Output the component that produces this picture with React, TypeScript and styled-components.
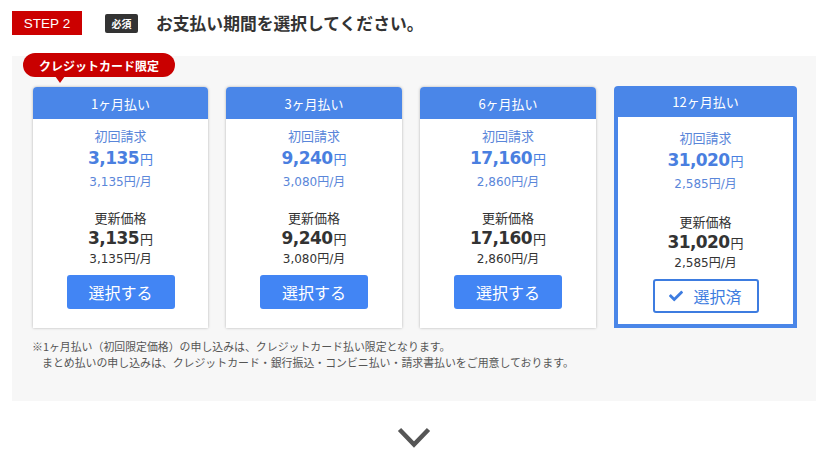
import React from 'react';
import styled, { createGlobalStyle } from 'styled-components';
import { FaCheck } from 'react-icons/fa';

const GlobalStyle = createGlobalStyle`
  body {
    margin: 0;
    background: #fff;
    font-family: "DejaVu Sans", "Noto Sans CJK JP", sans-serif;
    color: #333;
  }
`;

const Page = styled.div`
  padding: 11px 12px 0;
`;

const StepRow = styled.div`
  display: flex;
  align-items: center;
  height: 24px;
`;

const StepBadge = styled.div`
  width: 70px;
  height: 24px;
  background: #cc0000;
  color: #fff;
  font-family: "Liberation Sans", Arial, sans-serif;
  font-size: 13.5px;
  display: flex;
  align-items: center;
  justify-content: center;
`;

const Required = styled.span`
  margin-left: 23px;
  width: 33px;
  height: 19px;
  background: #333;
  color: #fff;
  border-radius: 2px;
  font-family: "Noto Sans CJK JP", sans-serif;
  font-size: 10px;
  font-weight: 700;
  display: flex;
  align-items: center;
  justify-content: center;
`;

const Title = styled.h2`
  margin: 0 0 0 18px;
  font-family: "Noto Sans CJK JP", sans-serif;
  font-size: 16.8px;
  font-weight: 700;
  color: #333;
`;

const Panel = styled.section`
  margin-top: 21px;
  background: #f7f7f7;
  padding: 31px 21px 0;
  height: 345px;
  box-sizing: border-box;
`;

const Cards = styled.div`
  display: grid;
  grid-template-columns: 175px 176px 176px 183px;
  column-gap: 18px;
  align-items: start;
`;

const Card = styled.div<{ $selected?: boolean }>`
  position: relative;
  background: #fff;
  margin-top: ${(p) => (p.$selected ? '-1px' : '0')};
  box-shadow: ${(p) => (p.$selected ? 'none' : '0 0 3px rgba(0,0,0,0.28)')};
  border-radius: 4px 4px 0 0;
`;

const CardHead = styled.div<{ $selected?: boolean }>`
  height: ${(p) => (p.$selected ? '31px' : '32px')};
  background: #4a86e8;
  color: #fff;
  border-radius: 4px 4px 0 0;
  font-family: "Noto Sans CJK JP", sans-serif;
  font-size: 13px;
  display: flex;
  align-items: center;
  justify-content: center;
`;

const CardBody = styled.div<{ $selected?: boolean }>`
  display: flex;
  flex-direction: column;
  align-items: center;
  text-align: center;
  padding: ${(p) => (p.$selected ? '12px 0 11px' : '8px 0 19px')};
  border: ${(p) => (p.$selected ? '4px solid #4a86e8' : 'none')};
  border-top: none;
`;

const Label = styled.div<{ $blue?: boolean }>`
  font-family: "Noto Sans CJK JP", sans-serif;
  font-size: 13px;
  line-height: 18px;
  color: ${(p) => (p.$blue ? '#5a86d9' : '#333')};
`;

const Price = styled.div<{ $blue?: boolean }>`
  line-height: ${(p) => (p.$blue ? '26px' : '22px')};
  color: ${(p) => (p.$blue ? '#4a7fe0' : '#333')};
  b {
    font-size: 17px;
    font-weight: 700;
    letter-spacing: -0.6px;
  }
  span {
    font-family: "Noto Sans CJK JP", sans-serif;
    font-size: 13px;
    margin-left: 1px;
  }
`;

const Monthly = styled.div<{ $blue?: boolean }>`
  font-size: 12px;
  line-height: ${(p) => (p.$blue ? '20px' : '18px')};
  color: ${(p) => (p.$blue ? '#5a86d9' : '#333')};
`;

const Renewal = styled.div<{ $selected?: boolean }>`
  margin-top: ${(p) => (p.$selected ? '19px' : '17px')};
  display: flex;
  flex-direction: column;
  align-items: center;
`;

const SelectButton = styled.button<{ $selected?: boolean }>`
  margin-top: 7px;
  width: ${(p) => (p.$selected ? '106px' : '108px')};
  height: 34px;
  box-sizing: border-box;
  border-radius: 3px;
  border: ${(p) => (p.$selected ? '2px solid #3d7ce0' : 'none')};
  background: ${(p) => (p.$selected ? '#fff' : '#4285f4')};
  color: ${(p) => (p.$selected ? '#3d7ce0' : '#fff')};
  font-family: "Noto Sans CJK JP", sans-serif;
  font-size: 16px;
  display: flex;
  align-items: center;
  justify-content: center;
  gap: 10px;
  padding: 0;
  cursor: pointer;
  svg {
    font-size: 14px;
  }
`;

const Ribbon = styled.div`
  position: absolute;
  left: -10px;
  top: -34px;
  width: 152px;
  height: 24px;
  border-radius: 12px;
  background: #c90000;
  color: #fff;
  font-family: "Noto Sans CJK JP", sans-serif;
  font-size: 12px;
  font-weight: 700;
  display: flex;
  align-items: center;
  justify-content: center;
  &::after {
    content: '';
    position: absolute;
    left: 32px;
    bottom: -6px;
    border-left: 5px solid transparent;
    border-right: 5px solid transparent;
    border-top: 7px solid #c90000;
  }
`;

const Note = styled.p`
  margin: 10px 0 0 -1px;
  font-family: "Noto Sans CJK JP", sans-serif;
  font-size: 10.9px;
  line-height: 16px;
  color: #555;
  span {
    display: block;
    padding-left: 10px;
  }
`;

const ArrowRow = styled.div`
  display: flex;
  justify-content: center;
  margin-top: 26px;
`;

type Plan = {
  label: string;
  first: string;
  firstMonthly: string;
  renew: string;
  renewMonthly: string;
  selected?: boolean;
  ribbon?: boolean;
};

const plans: Plan[] = [
  { label: '1ヶ月払い', first: '3,135', firstMonthly: '3,135', renew: '3,135', renewMonthly: '3,135', ribbon: true },
  { label: '3ヶ月払い', first: '9,240', firstMonthly: '3,080', renew: '9,240', renewMonthly: '3,080' },
  { label: '6ヶ月払い', first: '17,160', firstMonthly: '2,860', renew: '17,160', renewMonthly: '2,860' },
  { label: '12ヶ月払い', first: '31,020', firstMonthly: '2,585', renew: '31,020', renewMonthly: '2,585', selected: true },
];

const PlanCard = ({ plan }: { plan: Plan }) => (
  <Card $selected={plan.selected}>
    {plan.ribbon && <Ribbon>クレジットカード限定</Ribbon>}
    <CardHead $selected={plan.selected}>{plan.label}</CardHead>
    <CardBody $selected={plan.selected}>
      <Label $blue>初回請求</Label>
      <Price $blue>
        <b>{plan.first}</b>
        <span>円</span>
      </Price>
      <Monthly $blue>{plan.firstMonthly}円/月</Monthly>
      <Renewal $selected={plan.selected}>
        <Label>更新価格</Label>
        <Price>
          <b>{plan.renew}</b>
          <span>円</span>
        </Price>
        <Monthly>{plan.renewMonthly}円/月</Monthly>
      </Renewal>
      <SelectButton $selected={plan.selected}>
        {plan.selected ? (
          <>
            <FaCheck />
            選択済
          </>
        ) : (
          '選択する'
        )}
      </SelectButton>
    </CardBody>
  </Card>
);

export default function App() {
  return (
    <Page>
      <GlobalStyle />
      <StepRow>
        <StepBadge>STEP 2</StepBadge>
        <Required>必須</Required>
        <Title>お支払い期間を選択してください。</Title>
      </StepRow>
      <Panel>
        <Cards>
          {plans.map((p) => (
            <PlanCard key={p.label} plan={p} />
          ))}
        </Cards>
        <Note>
          ※1ヶ月払い（初回限定価格）の申し込みは、クレジットカード払い限定となります。
          <span>まとめ払いの申し込みは、クレジットカード・銀行振込・コンビニ払い・請求書払いをご用意しております。</span>
        </Note>
      </Panel>
      <ArrowRow>
        <svg width="34" height="21" viewBox="0 0 34 21">
          <polyline points="2.5,2.5 17,17.5 31.5,2.5" fill="none" stroke="#555" strokeWidth="4.5" />
        </svg>
      </ArrowRow>
    </Page>
  );
}
